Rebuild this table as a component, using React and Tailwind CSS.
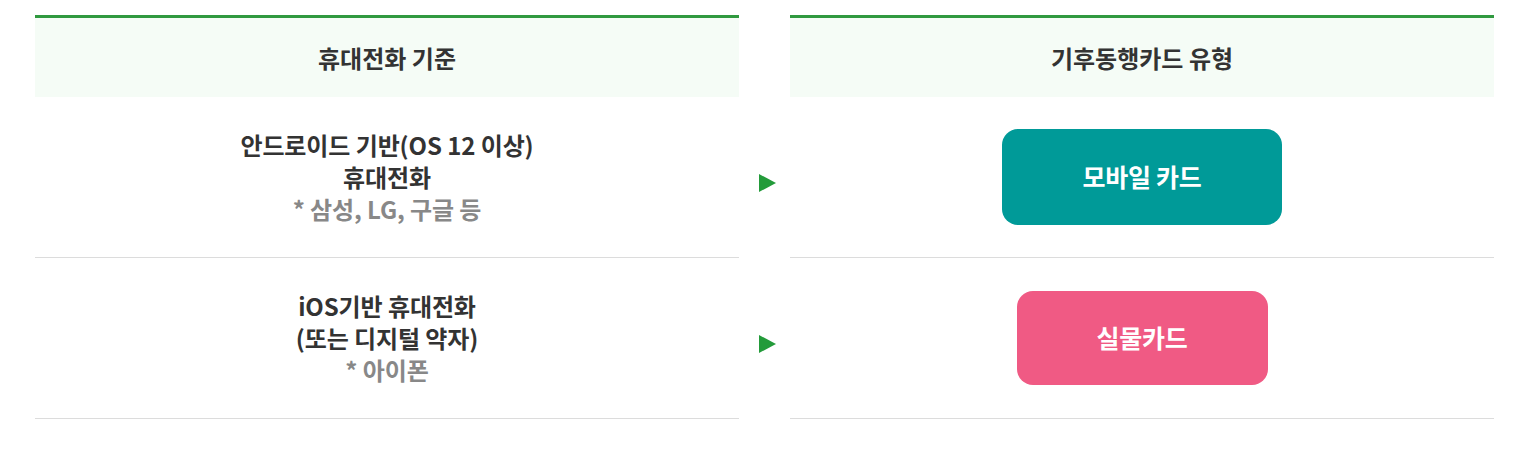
import React from "react";

const font = { fontFamily: '"Noto Sans CJK KR", "Noto Sans", sans-serif' };

const Arrow = () => (
  <div className="flex items-center justify-center pt-[10px] pl-[6px]">
    <svg width="17" height="18" viewBox="0 0 17 18">
      <polygon points="0,0 17,9 0,18" fill="#239b3a" />
    </svg>
  </div>
);

const rows = [
  {
    lines: ["안드로이드 기반(OS 12 이상)", "휴대전화"],
    note: "* 삼성, LG, 구글 등",
    card: "모바일 카드",
    btn: "w-[280px] h-[96px] bg-[#009a98]",
  },
  {
    lines: ["iOS기반 휴대전화", "(또는 디지털 약자)"],
    note: "* 아이폰",
    card: "실물카드",
    btn: "w-[251px] h-[94px] bg-[#f05a84]",
  },
];

export default function App() {
  return (
    <div className="w-[1524px] h-[476px] bg-white pt-[15px] pl-[35px]" style={font}>
      <div className="grid grid-cols-[704px_51px_704px]">
        <div className="border-t-[3px] border-[#30993f] bg-[#f5fcf6] h-[82px] flex items-center justify-center text-[24px] font-semibold text-[#333]">
          휴대전화 기준
        </div>
        <div />
        <div className="border-t-[3px] border-[#30993f] bg-[#f5fcf6] h-[82px] flex items-center justify-center text-[24px] font-semibold text-[#333]">
          기후동행카드 유형
        </div>
        {rows.map((r) => (
          <React.Fragment key={r.card}>
            <div className="h-[161px] border-b border-[#dcdcdc] flex flex-col items-center justify-center text-[24px] leading-[32px] font-semibold tracking-[-0.1px]">
              {r.lines.map((l) => (
                <div key={l} className="text-[#333]">{l}</div>
              ))}
              <div className="text-[#888]">{r.note}</div>
            </div>
            <Arrow />
            <div className="h-[161px] border-b border-[#dcdcdc] flex items-center justify-center">
              <div className={`${r.btn} rounded-[16px] flex items-center justify-center text-white text-[25px] font-bold tracking-[-0.3px]`}>
                {r.card}
              </div>
            </div>
          </React.Fragment>
        ))}
      </div>
    </div>
  );
}
